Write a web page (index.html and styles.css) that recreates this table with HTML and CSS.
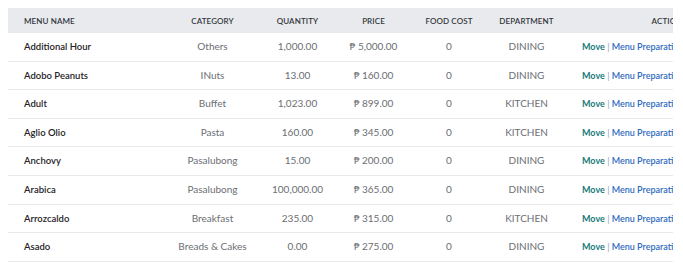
FILE: index.html
```html
<!DOCTYPE html>
<html>
<head>
<meta charset="utf-8">
<link rel="stylesheet" href="styles.css">
</head>
<body>
<div class="wrap">
<table class="menu-table">
<colgroup>
<col class="c-name"><col class="c-cat"><col class="c-qty"><col class="c-price"><col class="c-cost"><col class="c-dept"><col class="c-act">
</colgroup>
<thead>
<tr><th class="left">MENU NAME</th><th>CATEGORY</th><th>QUANTITY</th><th>PRICE</th><th>FOOD COST</th><th>DEPARTMENT</th><th>ACTION</th></tr>
</thead>
<tbody>
<tr><td class="name">Additional Hour</td><td>Others</td><td>1,000.00</td><td>₱ 5,000.00</td><td>0</td><td>DINING</td><td class="act"><a class="move">Move</a> <span class="sep">|</span> <a class="prep">Menu Preparation</a></td></tr>
<tr><td class="name">Adobo Peanuts</td><td>INuts</td><td>13.00</td><td>₱ 160.00</td><td>0</td><td>DINING</td><td class="act"><a class="move">Move</a> <span class="sep">|</span> <a class="prep">Menu Preparation</a></td></tr>
<tr><td class="name">Adult</td><td>Buffet</td><td>1,023.00</td><td>₱ 899.00</td><td>0</td><td>KITCHEN</td><td class="act"><a class="move">Move</a> <span class="sep">|</span> <a class="prep">Menu Preparation</a></td></tr>
<tr><td class="name">Aglio Olio</td><td>Pasta</td><td>160.00</td><td>₱ 345.00</td><td>0</td><td>KITCHEN</td><td class="act"><a class="move">Move</a> <span class="sep">|</span> <a class="prep">Menu Preparation</a></td></tr>
<tr><td class="name">Anchovy</td><td>Pasalubong</td><td>15.00</td><td>₱ 200.00</td><td>0</td><td>DINING</td><td class="act"><a class="move">Move</a> <span class="sep">|</span> <a class="prep">Menu Preparation</a></td></tr>
<tr><td class="name">Arabica</td><td>Pasalubong</td><td>100,000.00</td><td>₱ 365.00</td><td>0</td><td>DINING</td><td class="act"><a class="move">Move</a> <span class="sep">|</span> <a class="prep">Menu Preparation</a></td></tr>
<tr><td class="name">Arrozcaldo</td><td>Breakfast</td><td>235.00</td><td>₱ 315.00</td><td>0</td><td>KITCHEN</td><td class="act"><a class="move">Move</a> <span class="sep">|</span> <a class="prep">Menu Preparation</a></td></tr>
<tr><td class="name">Asado</td><td>Breads &amp; Cakes</td><td>0.00</td><td>₱ 275.00</td><td>0</td><td>DINING</td><td class="act"><a class="move">Move</a> <span class="sep">|</span> <a class="prep">Menu Preparation</a></td></tr>
</tbody>
</table>
</div>
</body>
</html>
```
FILE: styles.css
```css
html, body { margin: 0; padding: 0; background: #fff; }
body { padding: 8px; font-family: "Lato", "Noto Sans", sans-serif; }
.wrap { width: 665px; overflow: hidden; }
.menu-table { border-collapse: collapse; table-layout: fixed; width: 764px; }
.c-name { width: 162px; }
.c-cat { width: 85px; }
.c-qty { width: 85px; }
.c-price { width: 67px; }
.c-cost { width: 84px; }
.c-dept { width: 71px; }
.c-act { width: 210px; }
th {
  background: #e9eaed;
  color: #33373c;
  font-size: 8px;
  font-weight: 600;
  letter-spacing: 0.1px;
  text-align: center;
  height: 25px;
  padding: 0;
  white-space: nowrap;
}
th.left { text-align: left; padding-left: 16px; }
td {
  font-size: 10px;
  line-height: 13.6px;
  padding: 7px 0;
  color: #6b6e73;
  text-align: center;
  border-bottom: 1px solid #e9eaec;
  white-space: nowrap;
}
td.name { text-align: left; padding-left: 16px; color: #1f2226; font-weight: 600; font-size: 9.5px; }
td.act { text-align: left; padding-left: 20px; font-size: 9px; }
.move { color: #1a7a7a; font-weight: 700; }
.sep { color: #9aa0a6; }
.prep { color: #2f6bc0; font-weight: 600; }
```
